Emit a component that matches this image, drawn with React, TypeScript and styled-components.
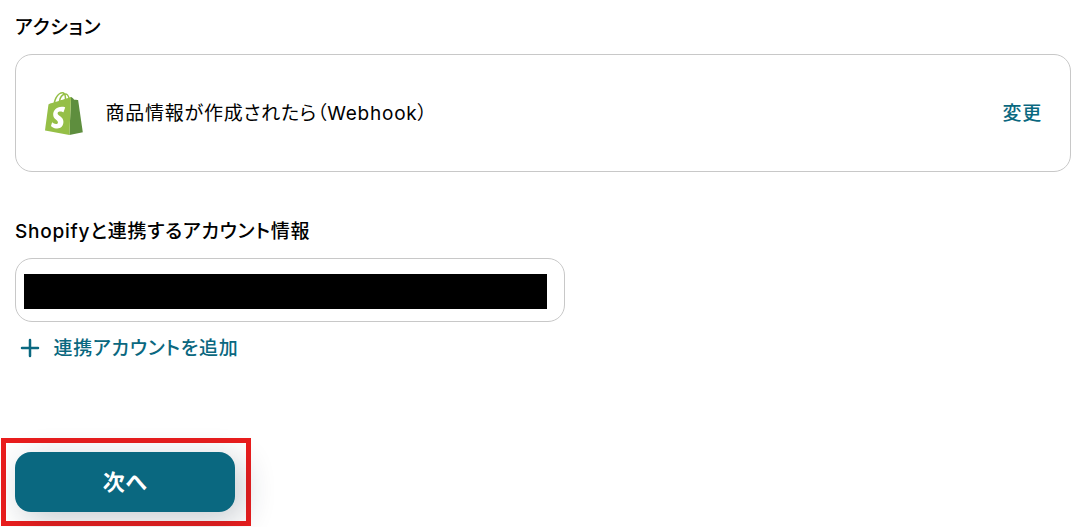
import React from 'react';
import styled, { createGlobalStyle } from 'styled-components';

const teal = '#0a6880';

const GlobalStyle = createGlobalStyle`
  *, *::before, *::after { box-sizing: border-box; }
  body {
    margin: 0;
    background: #fff;
    color: #000;
    font-family: Inter, 'Noto Sans CJK JP', sans-serif;
    font-size: 19px;
    line-height: 28px;
    letter-spacing: 0.04em;
    font-feature-settings: 'palt';
    overflow: hidden;
  }
  button { font: inherit; letter-spacing: inherit; font-feature-settings: inherit; border: 0; background: none; padding: 0; cursor: pointer; }
`;

const Page = styled.main`
  display: flex;
  flex-direction: column;
  align-items: flex-start;
  height: 527px;
  padding: 14px 5px 0 15px;
`;

const Label = styled.h2`
  margin: 0;
  font-size: inherit;
  font-weight: 500;
  white-space: nowrap;
`;

const ActionCard = styled.section`
  display: flex;
  align-items: center;
  width: 100%;
  height: 118px;
  margin: 12px 0 46px;
  padding: 2px 28px 0 29px;
  border: 1px solid #c8c8c8;
  border-radius: 17px;
`;

const ShopifyIcon = styled.svg`
  flex: none;
  width: 38px;
  height: 43px;
  margin: 0 22.5px 2px 0;
`;

const ActionName = styled.span`
  flex: 1;
`;

const LinkButton = styled.button`
  && {
    display: flex;
    align-items: center;
    color: ${teal};
    font-weight: 500;
    white-space: nowrap;
  }
`;

const AccountField = styled.div`
  display: flex;
  align-items: center;
  width: 550px;
  height: 64px;
  margin: 12px 0 13px;
  padding: 3px 17px 0 8px;
  border: 1px solid #c8c8c8;
  border-radius: 17px;
`;

const Redaction = styled.div`
  flex: 1;
  height: 35px;
  background: #000;
`;

const PlusIcon = styled.svg`
  width: 20px;
  height: 20px;
  margin: 0 13.5px 2px 5px;
`;

const Highlight = styled.div`
  width: 250px;
  height: 88px;
  margin: 75px 0 0 -14px;
  padding: 9px;
  border: 5px solid #e91d1d;
`;

const NextButton = styled.button`
  && {
    display: block;
    width: 220px;
    height: 60px;
    border-radius: 16px;
    background: ${teal};
    color: #fff;
    font-size: 22px;
    font-weight: 700;
    letter-spacing: 0.6px;
    box-shadow: 8px 8px 32px rgba(20, 40, 60, 0.24);
  }
`;

export default function App() {
  return (
    <>
      <GlobalStyle />
      <Page>
        <Label>アクション</Label>
        <ActionCard>
          <ShopifyIcon viewBox="1.4 0 21.2 24" aria-hidden="true">
            <path
              fill="#5e8e3e"
              d="M15.009 24l7.544-1.582s-2.604-17.613-2.625-17.73c-.018-.116-.114-.192-.211-.192s-1.929-.136-1.929-.136-1.275-1.274-1.439-1.411c-.045-.037-.075-.057-.121-.074l-.292-.041z"
            />
            <path
              fill="#95bf47"
              d="M11.71 11.305s-.81-.424-1.774-.424c-1.447 0-1.504.906-1.504 1.141 0 1.232 3.24 1.715 3.24 4.629 0 2.295-1.44 3.76-3.406 3.76-2.354 0-3.54-1.465-3.54-1.465l.646-2.086s1.245 1.066 2.28 1.066c.675 0 .975-.545.975-.932 0-1.619-2.654-1.694-2.654-4.359-.034-2.237 1.571-4.416 4.827-4.416 1.257 0 1.875.361 1.875.361l-.945 2.715-.02.01zM11.17.83c.136 0 .271.038.405.135-.984.465-2.064 1.639-2.508 3.992-.656.213-1.293.405-1.889.578C7.697 3.75 8.951.84 11.17.84V.83zm1.235 2.949v.135c-.754.232-1.583.484-2.394.736.466-1.777 1.333-2.645 2.085-2.971.193.501.309 1.176.309 2.1zm.539-2.234c.694.074 1.141.867 1.429 1.755-.349.114-.735.231-1.158.366v-.252c0-.752-.096-1.371-.271-1.871v.002zm2.992 1.289c-.02 0-.06.021-.078.021s-.289.075-.714.21c-.423-1.233-1.176-2.37-2.508-2.37h-.115C12.135.209 11.669 0 11.265 0 8.159 0 6.675 3.877 6.21 5.846c-1.194.365-2.063.636-2.16.674-.675.213-.694.232-.772.87-.075.462-1.83 14.063-1.83 14.063L15.009 24l.927-21.166z"
            />
          </ShopifyIcon>
          <ActionName>商品情報が作成されたら（Webhook）</ActionName>
          <LinkButton>変更</LinkButton>
        </ActionCard>
        <Label>Shopifyと連携するアカウント情報</Label>
        <AccountField>
          <Redaction />
        </AccountField>
        <LinkButton>
          <PlusIcon viewBox="0 0 20 20" fill="none" aria-hidden="true">
            <path d="M10 2v16M2 10h16" stroke="currentColor" strokeWidth="2.5" strokeLinecap="round" />
          </PlusIcon>
          連携アカウントを追加
        </LinkButton>
        <Highlight>
          <NextButton>次へ</NextButton>
        </Highlight>
      </Page>
    </>
  );
}
